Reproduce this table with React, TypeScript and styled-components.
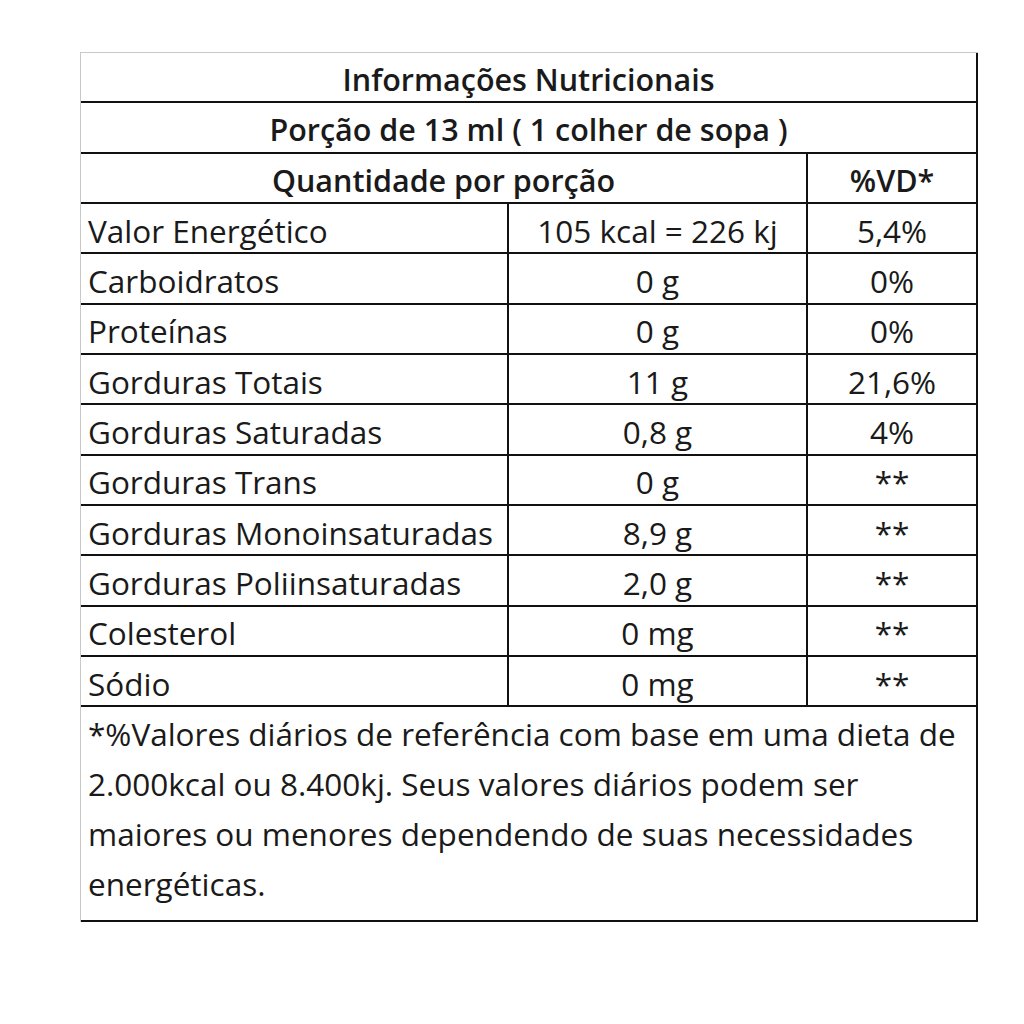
import React from "react";
import styled, { createGlobalStyle } from "styled-components";

const Global = createGlobalStyle`
  html, body { margin: 0; padding: 0; background: #ffffff; }
  body { font-family: "Open Sans", "Noto Sans", sans-serif; color: #1a1a1a; }
`;

const Page = styled.div`
  width: 1024px;
  height: 1024px;
  background: #fff;
  padding: 52px 0 0 80px;
  box-sizing: border-box;
`;

const Table = styled.div`
  display: grid;
  grid-template-columns: 426px 297px 168px;
  grid-template-rows: repeat(13, 48.33px) 213px;
  gap: 2px;
  width: fit-content;
  background: #111;
  padding: 0 2px 2px 0;
  border-top: 1px solid #c9c9c9;
  border-left: 1px solid #c9c9c9;
`;

const Cell = styled.div<{ $span?: number; $align?: "left" | "center"; $bold?: boolean }>`
  grid-column: span ${(p) => p.$span ?? 1};
  background: #fff;
  display: flex;
  align-items: center;
  justify-content: ${(p) => (p.$align === "left" ? "flex-start" : "center")};
  padding: 4px 0 0 ${(p) => (p.$align === "left" ? "7px" : "0")};
  box-sizing: border-box;
  font-size: ${(p) => (p.$bold ? "30.5px" : "31.5px")};
  font-weight: ${(p) => (p.$bold ? 600 : 400)};
  white-space: nowrap;
`;

const Footer = styled.div`
  grid-column: span 3;
  background: #fff;
  padding: 2px 8px 0 7px;
  box-sizing: border-box;
  font-size: 31.5px;
  line-height: 50px;
  white-space: nowrap;
`;

const rows: [string, string, string][] = [
  ["Valor Energético", "105 kcal = 226 kj", "5,4%"],
  ["Carboidratos", "0 g", "0%"],
  ["Proteínas", "0 g", "0%"],
  ["Gorduras Totais", "11 g", "21,6%"],
  ["Gorduras Saturadas", "0,8 g", "4%"],
  ["Gorduras Trans", "0 g", "**"],
  ["Gorduras Monoinsaturadas", "8,9 g", "**"],
  ["Gorduras Poliinsaturadas", "2,0 g", "**"],
  ["Colesterol", "0 mg", "**"],
  ["Sódio", "0 mg", "**"],
];

export default function App() {
  return (
    <Page>
      <Global />
      <Table>
        <Cell $span={3} $bold>Informações Nutricionais</Cell>
        <Cell $span={3} $bold>Porção de 13 ml ( 1 colher de sopa )</Cell>
        <Cell $span={2} $bold>Quantidade por porção</Cell>
        <Cell $bold>%VD*</Cell>
        {rows.map(([name, qty, vd]) => (
          <React.Fragment key={name}>
            <Cell $align="left">{name}</Cell>
            <Cell>{qty}</Cell>
            <Cell>{vd}</Cell>
          </React.Fragment>
        ))}
        <Footer>
          *%Valores diários de referência com base em uma dieta de
          <br />
          2.000kcal ou 8.400kj. Seus valores diários podem ser
          <br />
          maiores ou menores dependendo de suas necessidades
          <br />
          energéticas.
        </Footer>
      </Table>
    </Page>
  );
}
